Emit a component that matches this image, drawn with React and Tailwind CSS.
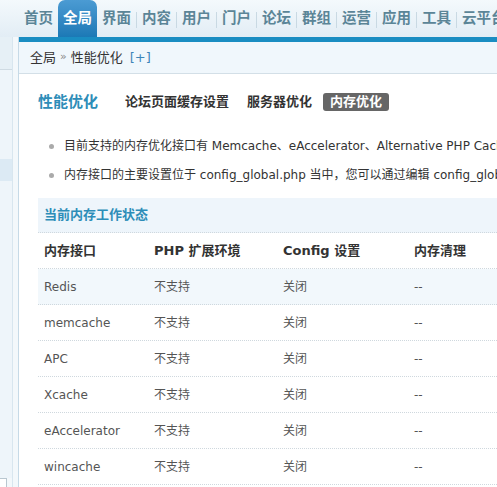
import React from "react";

const NAV = ["首页", "全局", "界面", "内容", "用户", "门户", "论坛", "群组", "运营", "应用", "工具", "云平台"];

const ROWS = [
  { name: "Redis", hl: true },
  { name: "memcache" },
  { name: "APC" },
  { name: "Xcache" },
  { name: "eAccelerator" },
  { name: "wincache" },
];

const font = { fontFamily: '"DejaVu Sans", "Noto Sans CJK SC", sans-serif' };

export default function App() {
  return (
    <div className="w-[497px] h-[487px] overflow-hidden bg-white text-[#333]" style={font}>
      {/* top nav */}
      <div className="h-[37px] flex items-end pl-[19px] bg-gradient-to-b from-[#f4f9fc] to-[#e2edf5] whitespace-nowrap">
        {NAV.map((t, i) => (
          <React.Fragment key={t}>
            {i > 2 && <span className="w-px h-[16px] mb-[9px] bg-[#c9d9e3] shrink-0" />}
            <div
              className={
                i === 1
                  ? "h-[37px] px-[5px] shrink-0 flex items-center justify-center rounded-t-[7px] bg-gradient-to-b from-[#4b9bd3] to-[#1b79b6] text-white text-[14.5px] font-bold"
                  : "h-[37px] px-[5px] shrink-0 flex items-center justify-center text-[#5b8597] text-[14.5px] font-bold"
              }
            >
              {t}
            </div>
          </React.Fragment>
        ))}
      </div>

      <div className="flex h-[450px]">
        {/* left sidebar */}
        <div className="w-[19px] shrink-0 flex border-r border-[#c6dae7] bg-[#f3f8fb]">
          <div className="w-[13px] flex flex-col border-r border-[#d8e6ef]">
            <div className="h-[33px] bg-[#e6f0f6] border-b border-[#cfdbe3]" />
            <div className="h-[89px] bg-[#eef5fa]" />
            <div className="h-[22px] bg-[#dceaf4]" />
            <div className="flex-1 bg-[#eef5fa]" />
            <div className="h-[9px] w-[7px] border-t border-r border-[#b9c7d0] bg-white" />
          </div>
        </div>

        {/* main */}
        <div className="flex-1 flex flex-col min-w-0">
          <div className="h-[5px] bg-[#1a8dc2]" />
          <div className="h-[32px] flex items-center pl-[11px] bg-[#f0f7fc] border-b border-[#d3dfe7] text-[13px] whitespace-nowrap">
            <span>全局</span>
            <span className="mx-[4px] text-[#888] text-[11px]">»</span>
            <span>性能优化</span>
            <span className="ml-[7px] text-[#3d85b8]">[+]</span>
          </div>

          <div className="flex-1 pl-[19px] pt-[19px] bg-white whitespace-nowrap">
            {/* title + tabs */}
            <div className="h-[18px] flex items-center">
              <span className="text-[15px] font-bold text-[#2d8db8] mr-[27px]">性能优化</span>
              <span className="text-[13px] font-bold text-[#333] mr-[18px]">论坛页面缓存设置</span>
              <span className="text-[13px] font-bold text-[#333] mr-[11px]">服务器优化</span>
              <span className="h-[18px] px-[7px] flex items-center rounded-[3px] bg-[#666] text-white text-[13px] font-bold">
                内存优化
              </span>
            </div>

            {/* tips */}
            <ul className="mt-[21px] text-[12px] leading-[29px] text-[#333]">
              <li className="flex items-center">
                <span className="w-[5px] h-[5px] rounded-full bg-[#aaa] ml-[11px] mr-[10px] shrink-0" />
                <span>目前支持的内存优化接口有 Memcache、eAccelerator、Alternative PHP Cache(APC)、Xcache、Redis、WinCache</span>
              </li>
              <li className="flex items-center">
                <span className="w-[5px] h-[5px] rounded-full bg-[#aaa] ml-[11px] mr-[10px] shrink-0" />
                <span>内存接口的主要设置位于 config_global.php 当中，您可以通过编辑 config_global.php 进行高级设置</span>
              </li>
            </ul>

            {/* section header */}
            <div className="mt-[8px] h-[35px] flex items-center pl-[6px] bg-[#eef5fb] border-b border-dotted border-[#cfd8de] text-[13px] font-bold text-[#2d8db8]">
              当前内存工作状态
            </div>

            {/* table */}
            <div className="grid grid-cols-[110px_129px_131px_1fr] h-[36px] items-center border-b border-dotted border-[#cfd8de] text-[13px] font-bold text-[#333]">
              <span className="pl-[6px]">内存接口</span>
              <span className="pl-[6px]">PHP 扩展环境</span>
              <span className="pl-[6px]">Config 设置</span>
              <span className="pl-[6px]">内存清理</span>
            </div>
            {ROWS.map((r) => (
              <div
                key={r.name}
                className={
                  r.hl
                    ? "grid grid-cols-[110px_129px_131px_1fr] h-[36px] items-center bg-[#f2f8fc] border-b border-dotted border-[#cfd8de] text-[12px] text-[#555]"
                    : "grid grid-cols-[110px_129px_131px_1fr] h-[36px] items-center border-b border-dotted border-[#cfd8de] text-[12px] text-[#555]"
                }
              >
                <span className="pl-[6px]">{r.name}</span>
                <span className="pl-[6px]">不支持</span>
                <span className="pl-[6px]">关闭</span>
                <span className="pl-[6px]">--</span>
              </div>
            ))}
          </div>
        </div>
      </div>
    </div>
  );
}
